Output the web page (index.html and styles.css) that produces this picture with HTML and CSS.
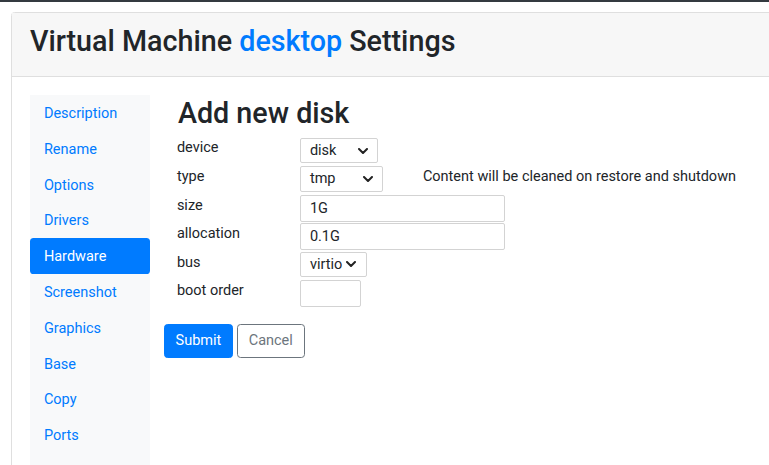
FILE: index.html
```html
<!DOCTYPE html>
<html lang="en">
<head>
<meta charset="utf-8">
<title>Virtual Machine desktop Settings</title>
<link rel="stylesheet" href="styles.css">
</head>
<body>
<div class="topbar"></div>
<div class="card">
  <div class="card-header">
    <h1 class="title">Virtual Machine <span class="vm-name">desktop</span> Settings</h1>
  </div>
  <div class="card-body">
    <nav class="sidenav">
      <a class="nav-link">Description</a>
      <a class="nav-link">Rename</a>
      <a class="nav-link">Options</a>
      <a class="nav-link">Drivers</a>
      <a class="nav-link active">Hardware</a>
      <a class="nav-link">Screenshot</a>
      <a class="nav-link">Graphics</a>
      <a class="nav-link">Base</a>
      <a class="nav-link">Copy</a>
      <a class="nav-link">Ports</a>
      <a class="nav-link"></a>
    </nav>
    <main class="content">
      <h2 class="heading">Add new disk</h2>
      <div class="form-grid">
        <div class="label">device</div>
        <div class="field">
          <span class="select w-disk"><span class="sel-text">disk</span><svg class="chev" viewBox="0 0 10 6" width="10" height="6"><polyline points="1,1 5,5 9,1"/></svg></span>
        </div>
        <div class="label">type</div>
        <div class="field">
          <span class="select w-type"><span class="sel-text">tmp</span><svg class="chev" viewBox="0 0 10 6" width="10" height="6"><polyline points="1,1 5,5 9,1"/></svg></span>
          <span class="hint">Content will be cleaned on restore and shutdown</span>
        </div>
        <div class="label">size</div>
        <div class="field"><span class="input w-size">1G</span></div>
        <div class="label">allocation</div>
        <div class="field"><span class="input w-size">0.1G</span></div>
        <div class="label">bus</div>
        <div class="field">
          <span class="select w-bus"><span class="sel-text">virtio</span><svg class="chev" viewBox="0 0 10 6" width="10" height="6"><polyline points="1,1 5,5 9,1"/></svg></span>
        </div>
        <div class="label">boot order</div>
        <div class="field"><span class="input w-boot"></span></div>
      </div>
      <div class="buttons">
        <button class="btn btn-primary">Submit</button>
        <button class="btn btn-outline">Cancel</button>
      </div>
    </main>
  </div>
</div>
</body>
</html>
```
FILE: styles.css
```css
html, body {
  margin: 0;
  padding: 0;
  overflow: hidden;
  background: #ffffff;
}
body {
  font-family: Roboto, "Liberation Sans", sans-serif;
  font-size: 14.5px;
  line-height: 1.5;
  color: #212529;
  width: 769px;
  height: 465px;
}
.topbar {
  height: 2px;
  background: #343a40;
}
.card {
  margin: 10px 0 0 11px;
  width: 820px;
  height: 600px;
  border: 1px solid #dfdfdf;
  border-radius: 3.5px;
  box-sizing: border-box;
}
.card-header {
  background: #f7f7f7;
  border-bottom: 1px solid #dfdfdf;
  padding: 10.7px 17.9px;
}
.title {
  margin: 0 0 7.15px 0;
  font-size: 28.7px;
  line-height: 1.2;
  font-weight: 500;
  color: #212529;
}
.vm-name {
  color: #007bff;
}
.card-body {
  display: flex;
  padding: 18.5px 17.9px 17.9px 17.9px;
  gap: 14px;
  align-items: stretch;
}
.sidenav {
  width: 120px;
  background: #f8f9fa;
  display: flex;
  flex-direction: column;
  height: 420px;
  margin-top: -0.5px;
}
.nav-link {
  display: block;
  height: 35.78px;
  box-sizing: border-box;
  padding: 8.2px 14px 5.8px 14px;
  color: #007bff;
  line-height: 21.75px;
  border-radius: 3.6px;
}
.nav-link.active {
  background: #007bff;
  color: #ffffff;
}
.content {
  flex: 1;
}
.heading {
  margin: 1px 0 6.5px 14px;
  font-size: 28.7px;
  line-height: 1.2;
  font-weight: 500;
}
.form-grid {
  display: grid;
  grid-template-columns: 123px auto;
  grid-auto-rows: 28.6px;
  margin-left: 13px;
}
.label {
  line-height: 21.75px;
}
.field {
  display: flex;
  align-items: flex-start;
}
.select {
  display: flex;
  align-items: center;
  justify-content: space-between;
  box-sizing: border-box;
  height: 25px;
  padding: 0 9px 0 9px;
  border: 1px solid #d3d3d3;
  border-radius: 2px;
  background: #ffffff;
  color: #212529;
  font-size: 14.5px;
}
.sel-text {
  line-height: 23px;
}
.w-disk { width: 78px; margin-top: 1px; }
.w-type { width: 83px; height: 26px; }
.w-bus { width: 67px; padding-right: 10px; }
.chev {
  fill: none;
  stroke: #222222;
  stroke-width: 2;
  stroke-linecap: round;
  stroke-linejoin: round;
}
.hint {
  margin-left: 40px;
  line-height: 22px;
  color: #212529;
}
.input {
  display: block;
  box-sizing: border-box;
  height: 27px;
  border: 1px solid #d3d3d3;
  border-radius: 2px;
  padding: 0 9px;
  line-height: 25px;
  color: #212529;
}
.w-size { width: 205px; }
.w-boot { width: 61px; }
.buttons {
  display: flex;
  gap: 4px;
  margin-top: 15px;
}
.btn {
  font-family: Roboto, "Liberation Sans", sans-serif;
  font-size: 14.5px;
  line-height: 21.75px;
  padding: 5.4px 10.7px;
  border-radius: 3.6px;
  border: 1px solid transparent;
  margin: 0;
  cursor: pointer;
}
.btn-primary {
  background: #007bff;
  border-color: #007bff;
  color: #ffffff;
}
.btn-outline {
  background: #ffffff;
  border-color: #6c757d;
  color: #6c757d;
}
```
